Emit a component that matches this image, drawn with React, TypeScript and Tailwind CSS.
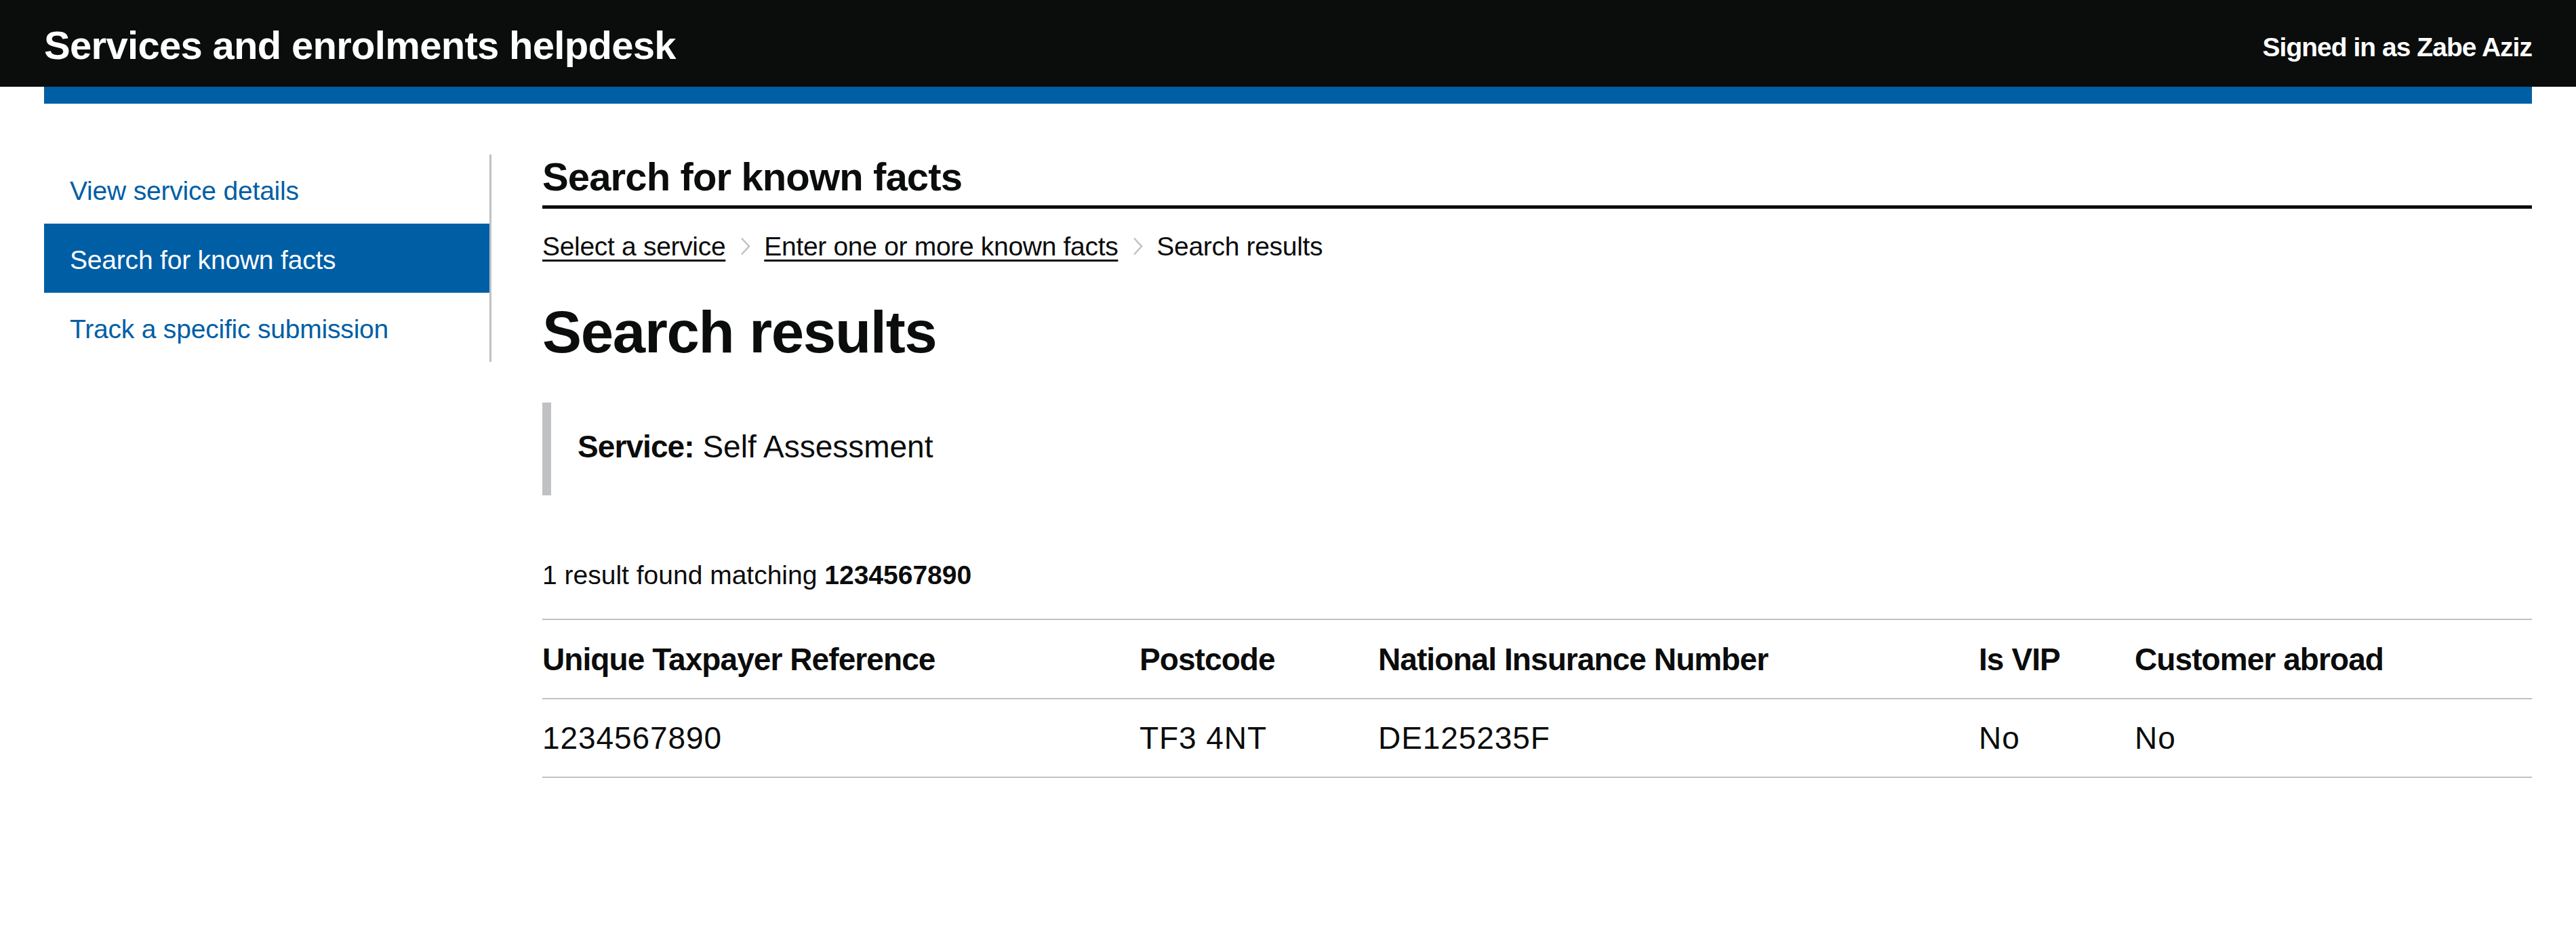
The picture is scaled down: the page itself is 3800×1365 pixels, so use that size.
import React from 'react';

const navItems = [
  { label: 'View service details', active: false },
  { label: 'Search for known facts', active: true },
  { label: 'Track a specific submission', active: false },
];

const columns = [
  { title: 'Unique Taxpayer Reference', width: 'w-[881px]', value: '1234567890' },
  { title: 'Postcode', width: 'w-[352px]', value: 'TF3 4NT' },
  { title: 'National Insurance Number', width: 'w-[886px]', value: 'DE125235F' },
  { title: 'Is VIP', width: 'w-[230px]', value: 'No' },
  { title: 'Customer abroad', width: '', value: 'No' },
];

const Chevron: React.FC = () => (
  <svg width="15" height="27" viewBox="0 0 15 27" className="ml-[22px] mr-[20px] shrink-0" aria-hidden>
    <path d="M2 1.5 L13 13.5 L2 25.5" fill="none" stroke="#bfc1c3" strokeWidth="2.5" />
  </svg>
);

export default function App() {
  return (
    <div className="min-h-screen bg-white text-[#0b0c0c] font-['Liberation_Sans',Arial,sans-serif]">
      {/* header */}
      <header className="h-[128px] bg-[#0b0c0c] px-[65px] flex justify-between items-start text-white font-bold">
        <div className="mt-[38px] text-[58px] leading-[58px] tracking-[-0.012em]">
          Services and enrolments helpdesk
        </div>
        <div className="mt-[50px] text-[39px] leading-[39px] tracking-[-0.025em]">
          Signed in as Zabe Aziz
        </div>
      </header>
      <div className="mx-[65px] h-[25px] bg-[#005ea5]" />

      <div className="flex items-start px-[65px] mt-[75px]">
        {/* side nav */}
        <nav className="w-[660px] shrink-0 border-r-[3px] border-[#bfc1c3]">
          {navItems.map((item) => (
            <div
              key={item.label}
              className={`h-[102px] pt-[34px] pl-[38px] text-[39px] leading-[39px] tracking-[-0.005em] ${
                item.active ? 'bg-[#005ea5] text-white' : 'text-[#005ea5]'
              }`}
            >
              {item.label}
            </div>
          ))}
        </nav>

        {/* main */}
        <main className="flex-1 pl-[75px]">
          <h2 className="mt-[4px] pb-[13px] border-b-[5px] border-[#0b0c0c] text-[58px] leading-[58px] font-bold tracking-[-0.015em]">
            Search for known facts
          </h2>

          <div className="mt-[36px] flex items-center text-[39px] leading-[39px] tracking-[-0.008em]">
            <a className="underline decoration-[3px] underline-offset-[6px]">Select a service</a>
            <Chevron />
            <a className="underline decoration-[3px] underline-offset-[6px]">Enter one or more known facts</a>
            <Chevron />
            <span>Search results</span>
          </div>

          <h1 className="mt-[63px] text-[87px] leading-[87px] font-bold tracking-[-0.015em]">Search results</h1>

          <div className="mt-[61px] border-l-[13px] border-[#bfc1c3] pl-[39px] pt-[42px] pb-[49px] text-[46px] leading-[46px]">
            <span className="font-bold tracking-[-0.02em]">Service:</span> Self Assessment
          </div>

          <p className="mt-[98px] text-[39px] leading-[39px]">
            1 result found matching <span className="font-bold">1234567890</span>
          </p>

          <table className="mt-[45px] w-full table-fixed border-collapse border-t-2 border-[#bfc1c3] text-[46px] leading-[46px]">
            <thead>
              <tr className="border-b-2 border-[#bfc1c3]">
                {columns.map((c) => (
                  <th
                    key={c.title}
                    className={`${c.width} text-left font-bold pt-[35px] pb-[34px] p-0 tracking-[-0.02em]`}
                  >
                    {c.title}
                  </th>
                ))}
              </tr>
            </thead>
            <tbody>
              <tr className="border-b-2 border-[#bfc1c3]">
                {columns.map((c) => (
                  <td key={c.title} className="text-left pt-[34px] pb-[34px] tracking-[0.02em]">
                    {c.value}
                  </td>
                ))}
              </tr>
            </tbody>
          </table>
        </main>
      </div>
    </div>
  );
}
